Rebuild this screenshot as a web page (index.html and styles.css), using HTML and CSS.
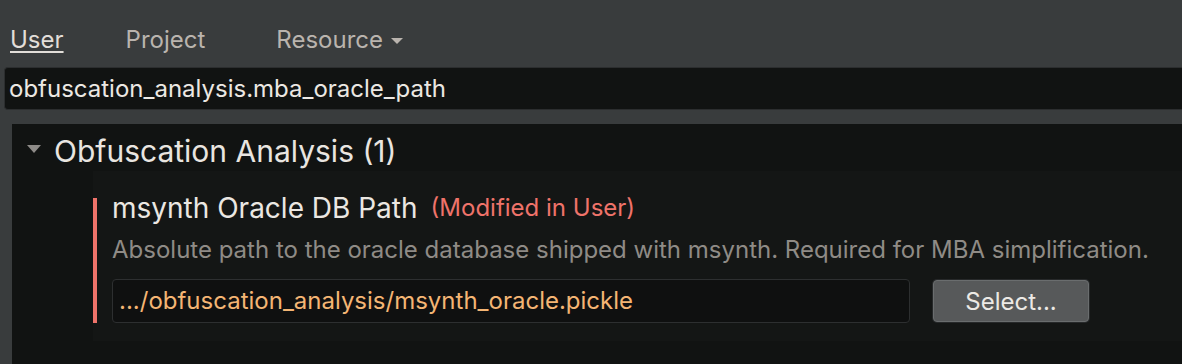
FILE: index.html
```html
<!DOCTYPE html>
<html>
<head>
<meta charset="utf-8">
<link rel="stylesheet" href="styles.css">
</head>
<body>
<nav class="tabs">
  <span class="tab active">User</span>
  <span class="tab tab-project">Project</span>
  <span class="tab tab-resource">Resource <span class="caret"></span></span>
</nav>
<div class="search">obfuscation_analysis.mba_oracle_path</div>
<section class="panel">
  <div class="group-header"><span class="disclosure"></span>Obfuscation Analysis (1)</div>
  <div class="group-body">
    <div class="setting">
      <div class="setting-title">msynth Oracle DB Path<span class="modified">(Modified in User)</span></div>
      <div class="setting-desc">Absolute path to the oracle database shipped with msynth. Required for MBA simplification.</div>
      <div class="setting-row">
        <div class="path-input">.../obfuscation_analysis/msynth_oracle.pickle</div>
        <button class="select-btn">Select...</button>
      </div>
    </div>
  </div>
</section>
</body>
</html>
```

FILE: styles.css
```css
html, body {
  margin: 0;
  padding: 0;
  height: 100%;
  overflow: hidden;
}
body {
  background: #393c3d;
  font-family: Inter, "Noto Sans", sans-serif;
  color: #e8e4df;
}
.tabs {
  display: flex;
  align-items: center;
  padding: 26px 0 0 10px;
  height: 28px;
}
.tab {
  font-size: 24px;
  line-height: 28px;
  color: #bab4ae;
  display: flex;
  align-items: center;
  white-space: pre;
}
.tab-project { margin-left: 62px; }
.tab-resource { margin-left: 71px; }
.tab.active {
  color: #e2ded9;
  text-decoration: underline;
  text-decoration-thickness: 2px;
  text-underline-offset: 3px;
}
.caret {
  display: inline-block;
  width: 0;
  height: 0;
  border-left: 6px solid transparent;
  border-right: 6px solid transparent;
  border-top: 6px solid #bab4ae;
  margin-left: 1px;
  margin-top: 2px;
}
.search {
  margin: 13px 0 0 4px;
  height: 43px;
  box-sizing: border-box;
  background: #111312;
  border: 1px solid #2c2e2f;
  border-right: none;
  border-radius: 4px 0 0 4px;
  font-size: 24px;
  line-height: 41px;
  padding-left: 4px;
  color: #ece8e3;
  white-space: nowrap;
}
.panel {
  margin: 14px 0 0 12px;
  background: #111312;
  height: 240px;
}
.group-header {
  display: flex;
  align-items: center;
  padding: 8px 0 0 15px;
  height: 39px;
  font-size: 30px;
  line-height: 39px;
  color: #e9e5e0;
}
.disclosure {
  width: 0;
  height: 0;
  border-left: 7.5px solid transparent;
  border-right: 7.5px solid transparent;
  border-top: 8px solid #8e8b88;
  margin-right: 13px;
  margin-top: -5px;
}
.group-body {
  margin-left: 81px;
  background: #141615;
  padding: 27px 0 18px 0;
}
.setting {
  border-left: 4px solid #ef736a;
  padding-left: 15px;
}
.setting-title {
  font-size: 28px;
  line-height: 20px;
  color: #ebe7e2;
  white-space: nowrap;
}
.modified {
  color: #ef736a;
  font-size: 24px;
  margin-left: 13px;
  vertical-align: 2px;
}
.setting-desc {
  font-size: 24px;
  line-height: 28px;
  margin-top: 18px;
  color: #8f8b86;
  white-space: nowrap;
}
.setting-row {
  display: flex;
  align-items: center;
  margin-top: 15px;
}
.path-input {
  width: 798px;
  height: 44px;
  box-sizing: border-box;
  background: #0f1010;
  border: 1px solid #2d2f30;
  border-radius: 4px;
  font-size: 24px;
  line-height: 42px;
  padding-left: 6px;
  color: #f4b574;
  white-space: nowrap;
}
.select-btn {
  margin-left: 23px;
  width: 156px;
  height: 42px;
  box-sizing: border-box;
  background: #57595a;
  border: 1px solid #6a6d6e;
  box-shadow: 0 0 0 1px #27292a;
  border-radius: 4px;
  color: #ece9e5;
  font-family: Inter, "Noto Sans", sans-serif;
  font-size: 24px;
  padding: 0;
}
```
